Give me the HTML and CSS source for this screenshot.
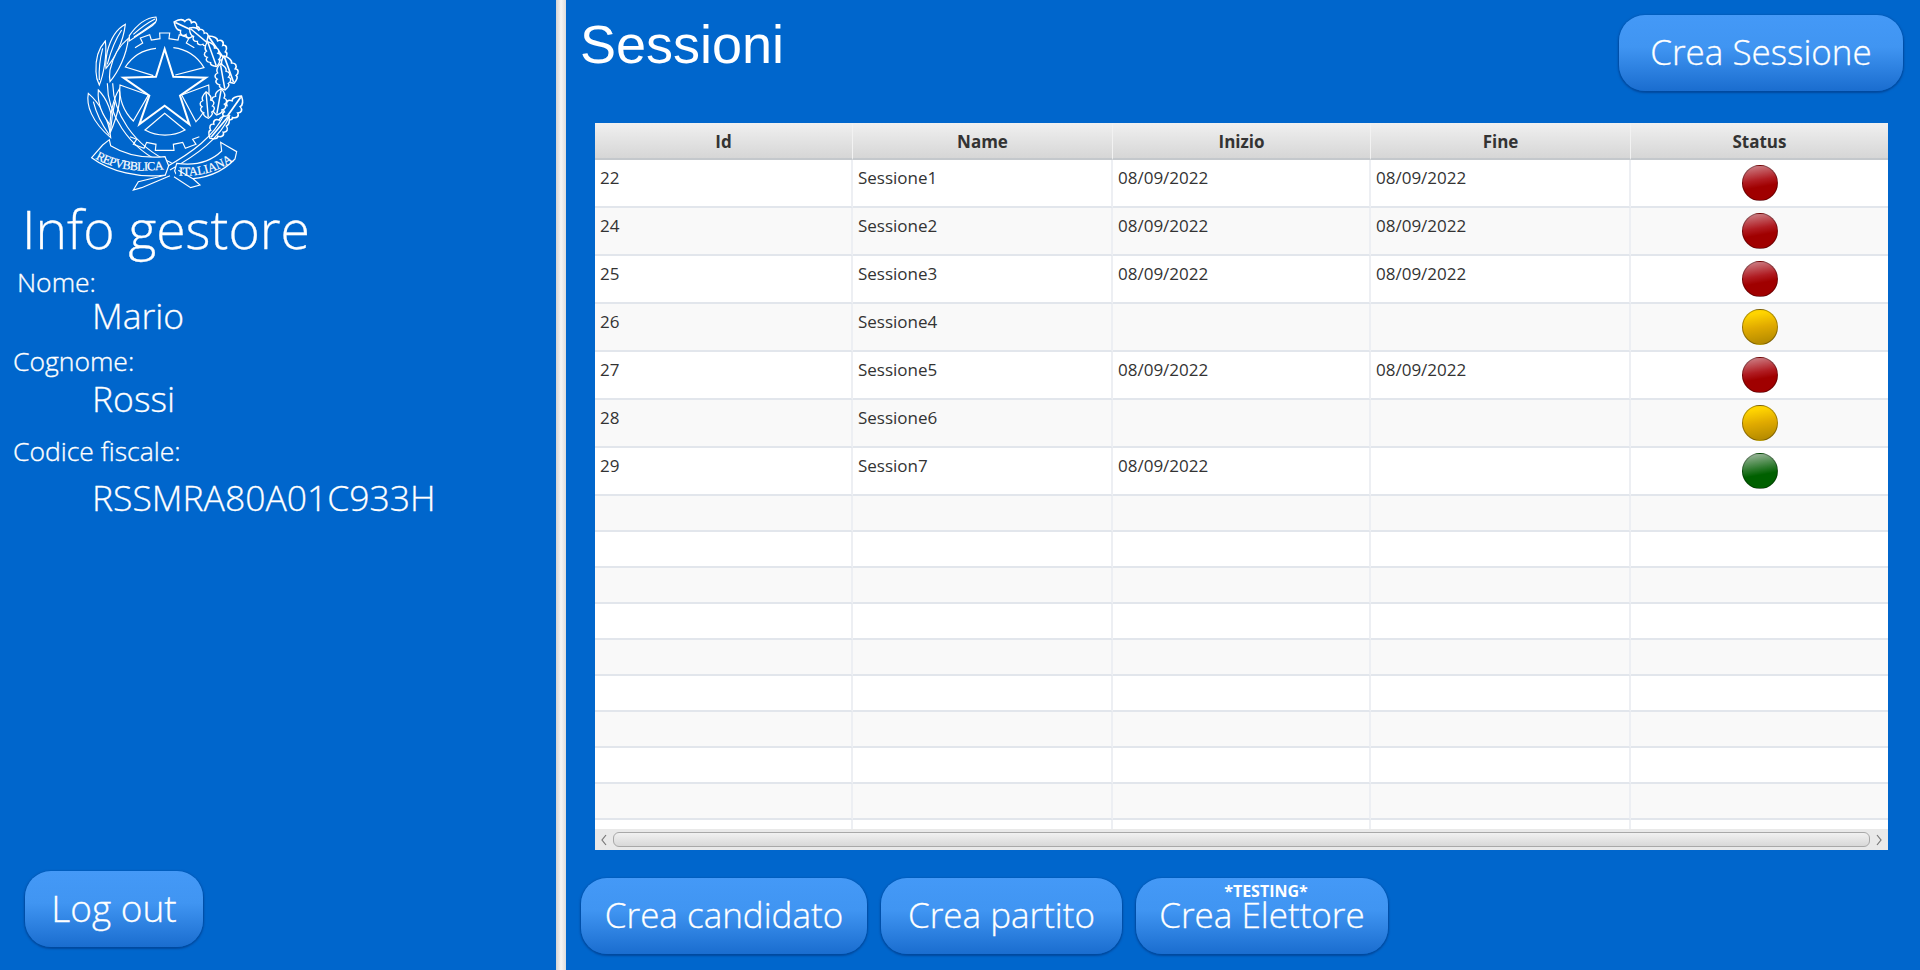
FILE: index.html
```html
<!DOCTYPE html>
<html lang="en">
<head>
  <meta charset="UTF-8">
  <meta name="viewport" content="width=device-width, initial-scale=1.0">
  <title>Sessioni</title>
  <link rel="stylesheet" href="styles.css">
</head>
<body>
  <aside class="sidebar">
    <svg class="emblem" viewBox="0 0 570 570" aria-label="Repubblica Italiana">
      <defs>
        <path id="oak" d="M0,0C6,-8 12,-14 18,-10C22,-18 32,-20 36,-13C42,-20 52,-18 54,-10C62,-13 72,-8 80,0C72,8 62,13 54,10C52,18 42,20 36,13C32,20 22,18 18,10C12,14 6,8 0,0ZM4,0L76,0"/>
        <path id="left-text" d="M76,460Q160,510 287,492"/>
        <path id="right-text" d="M326,512Q420,517 494,465"/>
      </defs>
      <g class="emblem-thin">
        <path d="M195,128L218,114L211,99L239,89L244,105L270,101L269,84L299,84L297,101L324,105L328,89L357,99L349,114L373,128"/>
        <path d="M180,395L200,403L190,418L222,430L230,412L258,418L256,436L312,436L310,418L338,412L346,430L378,418L368,403L388,395"/>
        <path d="M258,130A125,125 0 0 0 166,186L250,212"/>
        <path d="M310,128A125,125 0 0 1 402,188L316,210"/>
        <path d="M150,240L235,270L190,348A130,130 0 0 1 150,240Z"/>
        <path d="M416,240L335,270L378,350A130,130 0 0 0 416,240Z"/>
        <path d="M225,375L284,325L345,375A125,125 0 0 1 225,375Z"/>
      </g>
      <path class="emblem-star" d="M284,132L310,215L408,218L330,272L358,358L284,302L208,358L238,272L160,218L258,215Z"/>
      <g class="emblem-thin">
        <path class="leaf" d="M178,92C200,60 230,38 258,36C264,48 250,62 232,72C214,84 196,96 178,108Z"/>
        <path d="M190,88C210,70 230,55 255,42M192,96C215,80 235,68 256,52"/>
        <path class="leaf" d="M166,58C140,72 122,100 112,140C108,160 106,175 108,190C135,160 160,110 166,58Z"/>
        <path d="M155,75C135,105 122,140 112,178"/>
        <path class="leaf" d="M175,100C150,120 130,150 120,195C118,210 118,220 120,230C145,200 170,150 175,100Z"/>
        <path class="leaf" d="M106,108C86,130 76,165 78,200C78,215 82,228 88,240C100,210 112,150 106,108Z"/>
        <path d="M98,130C90,160 86,195 88,225"/>
        <path class="leaf" d="M55,265C48,300 65,350 122,398C118,345 90,295 55,265Z"/>
        <path class="leaf" d="M85,255C82,290 95,330 125,365C130,325 110,280 85,255Z"/>
        <path class="leaf" d="M148,252C130,280 118,330 120,385C135,350 155,300 148,252Z"/>
        <path d="M70,290C80,330 100,365 118,390M135,290C128,320 124,350 122,375"/>
        <path d="M112,235C112,320 170,430 290,480M128,235C130,320 185,420 305,474"/>
        <use href="#oak" transform="translate(392,88) rotate(205) scale(1.1 1.5)"/>
        <use href="#oak" transform="translate(420,120) rotate(220) scale(1 1.2)"/>
        <use href="#oak" transform="translate(465,165) rotate(235) scale(1.1 1.5)"/>
        <use href="#oak" transform="translate(440,185) rotate(250) scale(1 1.3)"/>
        <use href="#oak" transform="translate(492,235) rotate(250) scale(1.1 1.4)"/>
        <use href="#oak" transform="translate(465,255) rotate(260) scale(1 1.3)"/>
        <use href="#oak" transform="translate(464,345) rotate(-55) scale(1.1 1.5)"/>
        <use href="#oak" transform="translate(440,330) rotate(-80) scale(1 1.3)"/>
        <use href="#oak" transform="translate(420,400) rotate(-50) scale(1.1 1.4)"/>
        <use href="#oak" transform="translate(415,340) rotate(-95) scale(1 1.2)"/>
        <path d="M480,330C450,400 380,450 300,495M462,330C430,395 370,440 285,488"/>
        <path class="leaf" d="M98,420L118,404L122,422C170,452 230,460 285,455L296,482L286,510C210,520 120,500 65,458Z"/>
        <path class="leaf" d="M320,475C370,482 420,472 455,438L452,412L472,424L500,440L495,462C450,510 390,525 325,522L314,498Z"/>
        <path class="leaf" d="M288,510L205,530L190,555L215,548L300,512M312,515L362,548L390,540L370,522L325,496"/>
      </g>
      <text class="emblem-text"><textPath href="#left-text" textLength="212">REPVBBLICA</textPath></text>
      <text class="emblem-text"><textPath href="#right-text" textLength="172">ITALIANA</textPath></text>
    </svg>
    <h2 class="info-title">Info gestore</h2>
    <div class="info-label label-nome">Nome:</div>
    <div class="info-value value-nome">Mario</div>
    <div class="info-label label-cognome">Cognome:</div>
    <div class="info-value value-cognome">Rossi</div>
    <div class="info-label label-codice">Codice fiscale:</div>
    <div class="info-value value-codice">RSSMRA80A01C933H</div>
    <button class="btn btn-logout">Log out</button>
  </aside>
  <div class="divider"></div>
  <main class="content">
    <header class="content-head">
      <h1>Sessioni</h1>
      <button class="btn btn-sessione">Crea Sessione</button>
    </header>
    <section class="table-box">
      <div class="table-clip">
        <table>
          <colgroup>
            <col class="col-id"><col class="col-name"><col class="col-inizio"><col class="col-fine"><col>
          </colgroup>
          <thead>
            <tr><th>Id</th><th>Name</th><th>Inizio</th><th>Fine</th><th>Status</th></tr>
          </thead>
          <tbody>
            <tr><td>22</td><td>Sessione1</td><td>08/09/2022</td><td>08/09/2022</td><td><span class="led led-red"></span></td></tr>
            <tr><td>24</td><td>Sessione2</td><td>08/09/2022</td><td>08/09/2022</td><td><span class="led led-red"></span></td></tr>
            <tr><td>25</td><td>Sessione3</td><td>08/09/2022</td><td>08/09/2022</td><td><span class="led led-red"></span></td></tr>
            <tr><td>26</td><td>Sessione4</td><td></td><td></td><td><span class="led led-yellow"></span></td></tr>
            <tr><td>27</td><td>Sessione5</td><td>08/09/2022</td><td>08/09/2022</td><td><span class="led led-red"></span></td></tr>
            <tr><td>28</td><td>Sessione6</td><td></td><td></td><td><span class="led led-yellow"></span></td></tr>
            <tr><td>29</td><td>Session7</td><td>08/09/2022</td><td></td><td><span class="led led-green"></span></td></tr>
            <tr class="empty"><td></td><td></td><td></td><td></td><td></td></tr>
            <tr class="empty"><td></td><td></td><td></td><td></td><td></td></tr>
            <tr class="empty"><td></td><td></td><td></td><td></td><td></td></tr>
            <tr class="empty"><td></td><td></td><td></td><td></td><td></td></tr>
            <tr class="empty"><td></td><td></td><td></td><td></td><td></td></tr>
            <tr class="empty"><td></td><td></td><td></td><td></td><td></td></tr>
            <tr class="empty"><td></td><td></td><td></td><td></td><td></td></tr>
            <tr class="empty"><td></td><td></td><td></td><td></td><td></td></tr>
            <tr class="empty"><td></td><td></td><td></td><td></td><td></td></tr>
            <tr class="empty"><td></td><td></td><td></td><td></td><td></td></tr>
          </tbody>
        </table>
      </div>
      <div class="hscroll">
        <svg class="arrow" viewBox="0 0 8 12"><path d="M6,1L2,6L6,11"/></svg>
        <div class="thumb"></div>
        <svg class="arrow" viewBox="0 0 8 12"><path d="M2,1L6,6L2,11"/></svg>
      </div>
    </section>
    <div class="actions">
      <button class="btn btn-candidato">Crea candidato</button>
      <button class="btn btn-partito">Crea partito</button>
      <button class="btn btn-elettore"><span class="testing">*TESTING*</span>Crea Elettore</button>
    </div>
  </main>
</body>
</html>
```
FILE: styles.css
```css
* {
  box-sizing: border-box;
}
html, body {
  height: 100%;
}
body {
  margin: 0;
  display: flex;
  height: 970px;
  overflow: hidden;
  background-color: #0066cc;
  color: #fff;
  font-family: "Open Sans", "Noto Sans", sans-serif;
}

/* buttons */
.btn {
  height: 76px;
  padding: 0 0 4px;
  border: none;
  border-radius: 26px;
  background: linear-gradient(to bottom, #4499f7, #4095f2 42%, #1a6dcf);
  box-shadow: 0 1px 2px 1px rgba(0, 50, 120, 0.55);
  color: #fff;
  font-family: "Open Sans", "Noto Sans", sans-serif;
  font-size: 35px;
  font-weight: 300;
  -webkit-text-stroke: 0.3px #fff;
  position: relative;
}

/* left panel */
.sidebar {
  width: 556px;
  flex: none;
  display: flex;
  flex-direction: column;
  align-items: flex-start;
  padding-top: 5px;
}
.emblem {
  width: 190px;
  height: 190px;
  margin-left: 70px;
  flex: none;
}
.emblem-thin {
  fill: none;
  stroke: #fff;
  stroke-width: 3.5;
}
.emblem-thin use, .emblem-thin .leaf {
  fill: #0066cc;
}
.emblem-star {
  fill: #0066cc;
  stroke: #fff;
  stroke-width: 6;
}
.emblem-text {
  fill: #fff;
  stroke: #fff;
  stroke-width: 0.6;
  font-family: "Liberation Serif", serif;
  font-size: 37px;
}
.info-title {
  margin: 0 0 0 22px;
  font-size: 53.5px;
  font-weight: 300;
  line-height: 68px;
  -webkit-text-stroke: 0.3px #fff;
}
.info-label {
  font-size: 26.5px;
  font-weight: 300;
  line-height: 34px;
  -webkit-text-stroke: 0.35px #fff;
}
.info-value {
  margin-left: 92px;
  font-size: 35.5px;
  font-weight: 300;
  line-height: 46px;
  -webkit-text-stroke: 0.3px #fff;
}
.label-nome {
  margin-left: 17px;
  margin-top: 2px;
}
.value-nome {
  margin-top: -7px;
}
.label-cognome {
  margin-left: 13px;
  margin-top: 6px;
}
.value-cognome {
  margin-top: -3px;
}
.label-codice {
  margin-left: 13px;
  margin-top: 13px;
}
.value-codice {
  margin-top: 6px;
}
.btn-logout {
  margin: auto 0 23px 25px;
  width: 178px;
  font-size: 37px;
}

.divider {
  width: 10px;
  flex: none;
  background: linear-gradient(to right, #d4d4d4, #f5f5f5 50%, #dcdcdc);
}

/* right panel */
.content {
  flex: 1;
  min-width: 0;
  display: flex;
  flex-direction: column;
}
.content-head {
  height: 123px;
  display: flex;
  justify-content: space-between;
  align-items: flex-start;
  padding: 14px 17px 0 14px;
}
.content-head h1 {
  margin: 0;
  font-family: "Liberation Sans", Arial, sans-serif;
  font-size: 54px;
  font-weight: 400;
  line-height: 60px;
}
.btn-sessione {
  width: 284px;
  margin-top: 1px;
}

.table-box {
  width: 1293px;
  height: 727px;
  margin-left: 29px;
  display: flex;
  flex-direction: column;
  background: #fff;
}
.table-clip {
  height: 706px;
  overflow: hidden;
}
table {
  width: 100%;
  table-layout: fixed;
  border-collapse: separate;
  border-spacing: 0;
  color: #333;
  font-family: "Open Sans", "Noto Sans", sans-serif;
  font-size: 17px;
}
.col-id {
  width: 258px;
}
.col-name {
  width: 260px;
}
.col-inizio {
  width: 258px;
}
.col-fine {
  width: 260px;
}
th {
  height: 37px;
  padding: 1px 0 0;
  border-right: 1px solid #f2f2f2;
  border-bottom: 2px solid #c4c8cc;
  background: linear-gradient(to bottom, #f0f0f0, #d6d6d6);
  font-weight: 700;
}
th:last-child, td:last-child {
  border-right: none;
}
td {
  height: 48px;
  padding: 6px 5px 0;
  vertical-align: top;
  border-right: 2px solid #edeff3;
  border-bottom: 2px solid #e2e6ec;
  line-height: 24px;
}
tr.empty td {
  height: 36px;
  padding: 0;
}
tbody tr:nth-child(even) td {
  background: #f9f9f9;
}
td:last-child {
  padding: 5px 0 0;
  text-align: center;
}
.led {
  display: block;
  width: 36px;
  height: 36px;
  margin: 0 auto;
  border-radius: 50%;
  border: 1px solid rgba(0, 0, 0, 0.3);
}
.led-red {
  background: linear-gradient(170deg, #d08a90, #b01c22 42%, #a00000 60%);
}
.led-yellow {
  background: linear-gradient(170deg, #ffd400 15%, #e0aa00 50%, #ad8500);
}
.led-green {
  background: linear-gradient(170deg, #a5bda5, #2f7a2f 42%, #006000 60%);
}

.hscroll {
  height: 21px;
  display: flex;
  align-items: center;
  background: #e9e9e9;
}
.arrow {
  width: 18px;
  height: 12px;
  flex: none;
  fill: none;
  stroke: #777;
  stroke-width: 1.2;
}
.thumb {
  flex: 1;
  height: 15px;
  border: 1px solid #a8a8a8;
  border-radius: 6px;
  background: linear-gradient(to bottom, #f1f1f1, #d8d8d8);
}

.actions {
  display: flex;
  gap: 14px;
  padding: 28px 0 0 15px;
}
.btn-candidato {
  width: 286px;
}
.btn-partito {
  width: 241px;
}
.btn-elettore {
  width: 252px;
}
.testing {
  position: absolute;
  top: 3px;
  left: 0;
  right: 0;
  padding-left: 8px;
  font-size: 16px;
  font-weight: 700;
  line-height: 20px;
  -webkit-text-stroke: 0;
}
```
